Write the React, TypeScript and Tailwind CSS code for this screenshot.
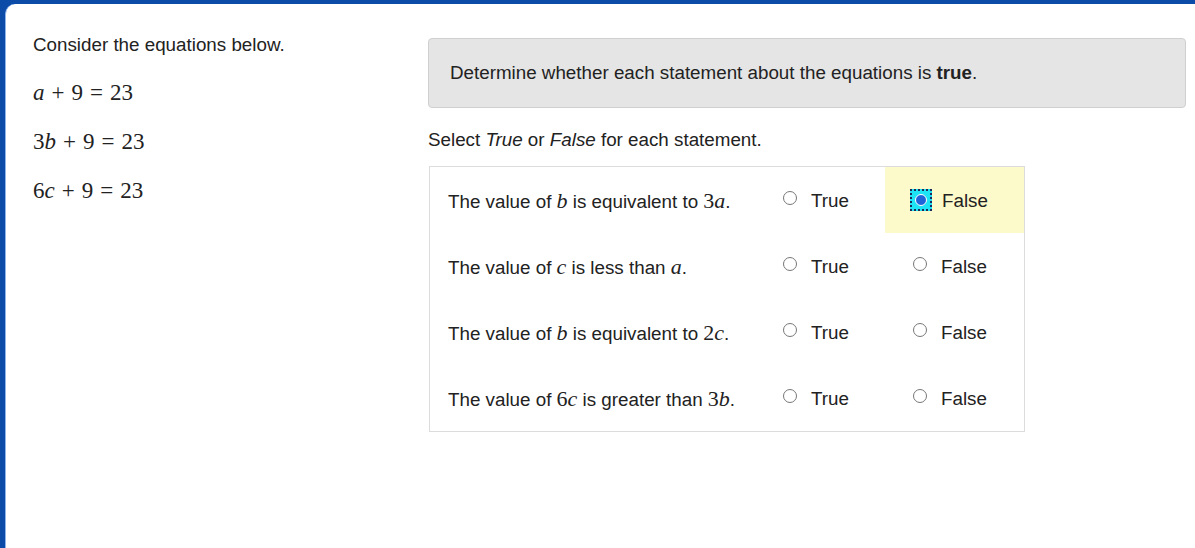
import React from 'react';

const serif = { fontFamily: '"Liberation Serif", "DejaVu Serif", serif' };

// little KaTeX-ish math runs
const V = ({ c }: { c: string }) => <span className="italic">{c}</span>;
const Op = ({ c }: { c: string }) => <span className="mx-[7px]">{c}</span>;

const Eq = ({ coef, v }: { coef: string; v: string }) => (
  <div className="text-[23px] leading-none text-[#222]" style={serif}>
    {coef}
    <V c={v} />
    <Op c="+" />
    9
    <Op c="=" />
    23
  </div>
);

const M = ({ n, v }: { n?: string; v: string }) => (
  <span className="text-[22px]" style={serif}>
    {n}
    <V c={v} />
  </span>
);

const rows = [
  { text: <>The value of <M v="b" /> is equivalent to <M n="3" v="a" />.</>, pick: 'false' },
  { text: <>The value of <M v="c" /> is less than <M v="a" />.</>, pick: '' },
  { text: <>The value of <M v="b" /> is equivalent to <M n="2" v="c" />.</>, pick: '' },
  { text: <>The value of <M n="6" v="c" /> is greater than <M n="3" v="b" />.</>, pick: '' },
];

const Radio = ({ on }: { on?: boolean }) =>
  on ? (
    <span className="w-[22px] h-[22px] bg-[#1ee3f5] border-2 border-dotted border-[#1a2a5a] flex items-center justify-center">
      <span className="w-[12px] h-[12px] rounded-full bg-[#1e63d8] border border-white" />
    </span>
  ) : (
    <span className="w-[14px] h-[14px] rounded-full border border-[#777] bg-white mt-[-4px] ml-[3px] mr-[2px]" />
  );

export default function App() {
  return (
    <div
      className="w-[1195px] h-[548px] bg-[#0c4ba8] pt-[4px] pl-[5px] overflow-hidden"
      style={{ fontFamily: '"Liberation Sans", Arial, sans-serif' }}
    >
      <div className="h-full bg-white rounded-tl-[10px] border-l border-[#8fb4ee] flex pl-[27px] pt-[32px] text-[18.8px] text-[#222]">
        <div className="w-[395px] shrink-0">
          <p className="leading-[18px]">Consider the equations below.</p>
          <div className="mt-[27px] flex flex-col gap-[26px]">
            <Eq coef="" v="a" />
            <Eq coef="3" v="b" />
            <Eq coef="6" v="c" />
          </div>
        </div>
        <div className="flex-1 pr-[9px]">
          <div className="mt-[2px] h-[70px] bg-[#e5e5e5] border border-[#cfcfcf] rounded-[4px] flex items-center pl-[21px]">
            <span>
              Determine whether each statement about the equations is <b>true</b>.
            </span>
          </div>
          <p className="mt-[21px] leading-[22px]">
            Select <i>True</i> or <i>False</i> for each statement.
          </p>
          <div className="mt-[15px] ml-[1px] w-[596px] border border-[#dcdcdc]">
            {rows.map((r, i) => (
              <div key={i} className="h-[66px] flex items-center">
                <div className="w-[341px] pl-[18px]">{r.text}</div>
                <div className="w-[114px] flex items-center pl-[9px] gap-[12px] h-full">
                  <Radio />
                  <span className="pt-[2px]">True</span>
                </div>
                <div
                  className={`flex-1 flex items-center pl-[25px] gap-[12px] h-full ${
                    r.pick === 'false' ? 'bg-[#fcfacb]' : ''
                  }`}
                >
                  {r.pick === 'false' ? <span className="ml-[0px] mr-[-2px]"><Radio on /></span> : <Radio />}
                  <span className="pt-[2px]">False</span>
                </div>
              </div>
            ))}
          </div>
        </div>
      </div>
    </div>
  );
}
